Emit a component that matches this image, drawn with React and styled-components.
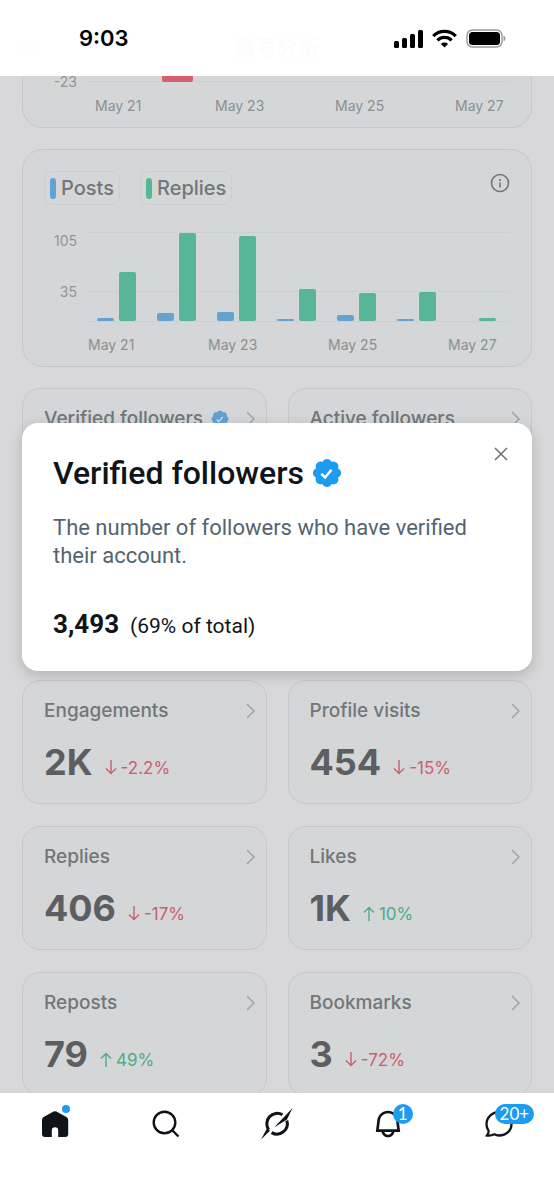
import styled, { createGlobalStyle } from 'styled-components'

const GlobalStyle = createGlobalStyle`
  * {
    box-sizing: border-box;
  }
  body {
    margin: 0;
    background-color: #fff;
    font-family: Inter, "Liberation Sans", sans-serif;
  }
  button {
    font: inherit;
    color: inherit;
    background: none;
    border: none;
    padding: 0;
    text-align: left;
    cursor: pointer;
  }
  h2, h3, p {
    margin: 0;
  }
  svg {
    display: block;
    flex-shrink: 0;
  }
`

const Screen = styled.div`
  display: flex;
  flex-direction: column;
  height: 100vh;
  background-color: #fff;
`

const StatusBar = styled.header`
  position: relative;
  display: flex;
  justify-content: space-between;
  align-items: center;
  height: 76px;
  flex-shrink: 0;
  padding: 0 48px 0 79px;
  color: #000;
`

const Clock = styled.div`
  font-size: 22px;
  font-weight: 600;
`

const StatusIcons = styled.div`
  display: flex;
  align-items: center;
  gap: 9px;
`

const FadedBar = styled.div`
  position: absolute;
  left: 0;
  right: 0;
  top: 34px;
  display: grid;
  grid-template-columns: 1fr auto 1fr;
  align-items: center;
  padding: 0 21px;
  font-family: Inter, "Noto Sans CJK SC", sans-serif;
  font-size: 21px;
  line-height: 28px;
  font-weight: 700;
  color: #fcfcfc;
`

const Content = styled.main`
  flex: 1;
  min-height: 0;
  overflow: hidden;
  padding: 0 22px;
  background-color: #d8d8da;
`

const ChartCard = styled.section`
  border: 1px solid #c5c7c9;
  border-radius: 21px;
  background-color: #d4d6d8;
  padding: ${(props) => (props.$cut ? '0 21px 11px' : '21px 21px 11px')};
  margin-bottom: 21px;
  ${(props) => props.$cut && 'border-top: none; border-top-left-radius: 0; border-top-right-radius: 0;'}
`

const ChartTop = styled.div`
  display: flex;
  align-items: flex-start;
  gap: 20px;
  margin-bottom: 27px;
`

const Legend = styled.div`
  display: flex;
  align-items: center;
  gap: 5px;
  height: 34px;
  padding: 0 5px;
  border: 1px solid #cccfd1;
  border-radius: 8px;
  color: #71767b;
  font-size: 20px;
  font-weight: 500;

  &::before {
    content: '';
    width: 6px;
    height: 21px;
    border-radius: 3px;
    background-color: ${(props) => props.$color};
  }
`

const InfoButton = styled.button`
  margin-left: auto;
  color: #71767b;
`

const ChartBody = styled.div`
  display: grid;
  grid-template-columns: 33px 1fr;
  column-gap: 11px;
`

const YLabels = styled.div`
  display: flex;
  flex-direction: column;
  gap: 35px;
  padding-top: ${(props) => (props.$cut ? '0' : '1px')};
  text-align: right;
  font-size: 14px;
  line-height: ${(props) => (props.$cut ? '12px' : '16px')};
  color: #91969a;
`

const Plot = styled.svg`
  width: 100%;
  height: auto;
`

const XLabels = styled.div`
  grid-column: 2;
  display: grid;
  grid-template-columns: 2fr 2fr 2fr 1fr;
  padding-top: ${(props) => (props.$cut ? '8px' : '13px')};
  margin-left: ${(props) => (props.$cut ? '7px' : '0')};
  margin-right: ${(props) => (props.$cut ? '-5px' : '2px')};
  font-size: 14px;
  line-height: 20px;
  white-space: nowrap;
  color: #8b8f92;
`

const Stats = styled.div`
  position: relative;
`

const StatGrid = styled.div`
  display: grid;
  grid-template-columns: 1fr 1fr;
  grid-auto-rows: 124px;
  gap: 22px 21px;
`

const StatCard = styled.button`
  display: flex;
  flex-direction: column;
  grid-row: ${(props) => props.$row};
  border: 1px solid #c5c7c9;
  border-radius: 18px;
  background-color: #d4d6d8;
  padding: 18px 10px 0 21px;
`

const StatHead = styled.div`
  display: flex;
  align-items: center;
  gap: 8px;
  width: 100%;
  color: #71767b;
  font-size: 19px;
  line-height: 24px;
  font-weight: 500;

  > svg:last-child {
    margin-left: auto;
  }
`

const StatValue = styled.div`
  display: flex;
  align-items: baseline;
  gap: 12px;
  margin-top: 16px;
  color: #5c5e61;
  font-size: 36px;
  line-height: 46px;
  font-weight: 700;
`

const Change = styled.span`
  display: flex;
  align-items: center;
  gap: 4px;
  font-size: 17px;
  line-height: 24px;
  font-weight: 400;
  color: ${(props) => (props.$up ? '#4dab8b' : '#c9606f')};
`

const Popover = styled.section`
  position: absolute;
  top: 35px;
  left: 0;
  right: 0;
  padding: 30px 31px 29px;
  border-radius: 16px;
  background-color: #fff;
  box-shadow: 0 4px 14px rgba(0, 0, 0, 0.18);
  color: #0f1419;
  font-family: Roboto, "Liberation Sans", sans-serif;
`

const CloseButton = styled.button`
  position: absolute;
  top: 24px;
  right: 24px;
  color: #6b7074;
`

const PopoverTitle = styled.h2`
  display: flex;
  align-items: center;
  gap: 8px;
  font-size: 32px;
  line-height: 40px;
  font-weight: 500;
`

const PopoverText = styled.p`
  margin-top: 21px;
  font-size: 22px;
  line-height: 28px;
  color: #536471;
`

const PopoverTotal = styled.p`
  display: flex;
  align-items: baseline;
  gap: 11px;
  margin-top: 38px;
  font-size: 21px;
  line-height: 32px;

  strong {
    font-size: 26px;
    font-weight: 700;
  }
`

const TabBar = styled.nav`
  display: grid;
  grid-template-columns: repeat(5, 1fr);
  justify-items: center;
  align-items: start;
  height: 107px;
  flex-shrink: 0;
  padding-top: 15px;
  background-color: #fff;
  color: #0f1419;
`

const Tab = styled.button`
  position: relative;
`

const Dot = styled.span`
  position: absolute;
  top: -3px;
  right: 1px;
  width: 8px;
  height: 8px;
  border-radius: 50%;
  background-color: #1d9bf0;
`

const Count = styled.span`
  position: absolute;
  top: -4px;
  left: ${(props) => (props.$wide ? '12px' : '21px')};
  min-width: 20px;
  padding: 0 ${(props) => (props.$wide ? '5px' : '0')};
  border-radius: 10px;
  background-color: #1d9bf0;
  color: #fff;
  font-family: Lato, sans-serif;
  font-size: 17px;
  line-height: 20px;
  text-align: center;
`

const days = [
  { posts: 3, replies: 49 },
  { posts: 8, replies: 88 },
  { posts: 9, replies: 85 },
  { posts: 2, replies: 32 },
  { posts: 6, replies: 28 },
  { posts: 2, replies: 29 },
  { posts: 0, replies: 3 },
]

const dates = ['May 21', 'May 23', 'May 25', 'May 27']

const stats = [
  { label: 'Engagements', value: '2K', change: '-2.2%', row: 3 },
  { label: 'Profile visits', value: '454', change: '-15%', row: 3 },
  { label: 'Replies', value: '406', change: '-17%', row: 4 },
  { label: 'Likes', value: '1K', change: '10%', up: true, row: 4 },
  { label: 'Reposts', value: '79', change: '49%', up: true, row: 5 },
  { label: 'Bookmarks', value: '3', change: '-72%', row: 5 },
]

const Verified = ({ size, color }) => (
  <svg width={size} height={size} viewBox="1 1 20 20" fill="none">
    <path
      fill={color}
      d="M20.396 11c-.018-.646-.215-1.275-.57-1.816-.354-.54-.852-.972-1.438-1.246.223-.607.27-1.264.14-1.897-.131-.634-.437-1.218-.882-1.687-.47-.445-1.053-.75-1.687-.882-.633-.13-1.29-.083-1.897.14-.273-.587-.704-1.086-1.245-1.44S11.647 1.62 11 1.604c-.646.017-1.273.213-1.813.568s-.969.854-1.24 1.44c-.608-.223-1.267-.272-1.902-.14-.635.13-1.22.436-1.69.882-.445.47-.749 1.055-.878 1.688-.13.633-.08 1.29.144 1.896-.587.274-1.087.705-1.443 1.245-.356.54-.555 1.17-.574 1.817.02.647.218 1.276.574 1.817.356.54.856.972 1.443 1.245-.224.606-.274 1.263-.144 1.896.13.634.433 1.218.877 1.688.47.443 1.054.747 1.687.878.633.132 1.29.084 1.897-.136.274.586.705 1.084 1.246 1.439.54.354 1.17.551 1.816.569.647-.016 1.276-.213 1.817-.567s.972-.854 1.245-1.44c.604.239 1.266.296 1.903.164.636-.132 1.22-.447 1.68-.907.46-.46.776-1.044.908-1.681s.075-1.299-.165-1.903c.586-.274 1.084-.705 1.439-1.246.354-.54.551-1.17.569-1.816z"
    />
    <path d="M7.2 11.6l2.5 2.4 4.3-5.2" stroke={color === '#1d9bf0' ? '#fff' : '#d4d6d8'} strokeWidth="1.7" />
  </svg>
)

const Chevron = () => (
  <svg width="10" height="16" viewBox="0 0 10 16" fill="none" stroke="#9ba6ae" strokeWidth="1.5">
    <path d="M1 1l7 7-7 7" />
  </svg>
)

const Arrow = ({ up }) => (
  <svg width="12" height="15" viewBox="0 0 12 15" fill="none" stroke="currentColor" strokeWidth="1.4">
    <path d={up ? 'M6 15V1M1 6.5L6 1.5l5 5' : 'M6 0v14M1 8.5l5 5 5-5'} />
  </svg>
)

function ChartDates({ cut }) {
  return (
    <XLabels $cut={cut}>
      {dates.map((date) => (
        <span key={date}>{date}</span>
      ))}
    </XLabels>
  )
}

function Stat({ stat }) {
  return (
    <StatCard $row={stat.row}>
      <StatHead>
        {stat.label}
        <Chevron />
      </StatHead>
      <StatValue>
        {stat.value}
        <Change $up={stat.up}>
          <Arrow up={stat.up} />
          {stat.change}
        </Change>
      </StatValue>
    </StatCard>
  )
}

function App() {
  return (
    <>
      <GlobalStyle />
      <Screen>
        <StatusBar>
          <FadedBar>
            <svg width="20" height="18" viewBox="0 0 20 18" fill="none" stroke="currentColor" strokeWidth="2">
              <path d="M20 9H2M9 1L1.5 9 9 17" />
            </svg>
            账号分析
          </FadedBar>
          <Clock>9:03</Clock>
          <StatusIcons>
            <svg width="29" height="19" viewBox="0 0 29 19">
              <rect x="0" y="12" width="5" height="7" rx="1.5" />
              <rect x="8" y="9" width="5" height="10" rx="1.5" />
              <rect x="16" y="5" width="5" height="14" rx="1.5" />
              <rect x="24" y="1" width="5" height="18" rx="1.5" />
            </svg>
            <svg width="25" height="19" viewBox="0 0 25 19" fill="none" stroke="#000" strokeWidth="3.3">
              <path d="M1.2 7.1a16 16 0 0 1 22.6 0" />
              <path d="M5.4 11.4a10 10 0 0 1 14.2 0" />
              <path d="M12.5 18.6l-3.6-3.7a5.2 5.2 0 0 1 7.2 0z" fill="#000" stroke="none" />
            </svg>
            <svg width="40" height="19" viewBox="0 0 40 19">
              <rect x="1" y="1" width="35" height="17" rx="5.5" fill="none" stroke="#999" strokeWidth="1.4" />
              <rect x="3" y="3" width="31" height="13" rx="3.5" />
              <path d="M37.5 6.5v6q2-1 2-3t-2-3z" fill="#999" />
            </svg>
          </StatusIcons>
        </StatusBar>

        <Content>
          <ChartCard $cut>
            <ChartBody>
              <YLabels $cut>-23</YLabels>
              <div>
                <Plot viewBox="0 0 422 12">
                  <path d="M0 5.5h422" stroke="#cdcfd2" />
                  <path d="M74 0h31v4q0 2-2 2H76q-2 0-2-2z" fill="#d2616c" />
                </Plot>
                <ChartDates cut />
              </div>
            </ChartBody>
          </ChartCard>

          <ChartCard>
            <ChartTop>
              <Legend $color="#62a3d4">Posts</Legend>
              <Legend $color="#58b698">Replies</Legend>
              <InfoButton aria-label="About this chart">
                <svg width="20" height="24" viewBox="0 0 20 24" fill="none" stroke="currentColor" strokeWidth="1.6">
                  <circle cx="10" cy="12" r="8.5" />
                  <path d="M10 11.5v5M10 8v2" />
                </svg>
              </InfoButton>
            </ChartTop>
            <ChartBody>
              <YLabels>
                <span>105</span>
                <span>35</span>
              </YLabels>
              <Plot viewBox="0 0 422 90">
                <path d="M0 .5h422M0 59.5h422M0 89.5h422" stroke="#cdcfd2" />
                {days.map((day, i) => (
                  <g key={i}>
                    <rect x={9 + i * 60} y={89 - day.posts} width="17" height={day.posts} rx={Math.min(2, day.posts / 2)} fill="#62a3d4" />
                    <rect x={31 + i * 60} y={89 - day.replies} width="17" height={day.replies} rx={Math.min(2, day.replies / 2)} fill="#58b698" />
                  </g>
                ))}
              </Plot>
              <ChartDates />
            </ChartBody>
          </ChartCard>

          <Stats>
            <StatGrid>
              <StatCard $row={1}>
                <StatHead>
                  Verified followers
                  <Verified size={18} color="#62a3d4" />
                  <Chevron />
                </StatHead>
              </StatCard>
              <StatCard $row={1}>
                <StatHead>
                  Active followers
                  <Chevron />
                </StatHead>
              </StatCard>
              {stats.map((stat) => (
                <Stat key={stat.label} stat={stat} />
              ))}
            </StatGrid>

            <Popover role="dialog" aria-label="Verified followers">
              <CloseButton aria-label="Close">
                <svg width="14" height="14" viewBox="0 0 14 14" stroke="currentColor" strokeWidth="1.5">
                  <path d="M1 1l12 12M13 1L1 13" />
                </svg>
              </CloseButton>
              <PopoverTitle>
                Verified followers
                <Verified size={30} color="#1d9bf0" />
              </PopoverTitle>
              <PopoverText>The number of followers who have verified their account.</PopoverText>
              <PopoverTotal>
                <strong>3,493</strong> (69% of total)
              </PopoverTotal>
            </Popover>
          </Stats>
        </Content>

        <TabBar>
          <Tab aria-label="Home">
            <svg width="32" height="32" viewBox="0 0 32 32" fill="currentColor">
              <path d="M14.6 3.6q1.4-.8 2.8 0l10 5.4q1.8 1 1.8 3V26q0 3-3 3h-7v-6.500q0-3.200-3.200-3.200t-3.200 3.200V29H6q-3 0-3-3V12q0-2 1.600-3z" />
            </svg>
            <Dot />
          </Tab>
          <Tab aria-label="Search">
            <svg width="32" height="32" viewBox="0 0 32 32" fill="none" stroke="currentColor" strokeWidth="2.4">
              <circle cx="14.5" cy="14.5" r="10.8" />
              <path d="M22 22l6.5 6.5" />
            </svg>
          </Tab>
          <Tab aria-label="Grok">
            <svg width="32" height="32" viewBox="0 0 32 32" fill="none" stroke="currentColor" strokeWidth="3">
              <path d="M21.5 6.800A10.400 10.400 0 0 0 7.600 21.600" />
              <path d="M25.800 12.500A10.400 10.400 0 0 1 10.600 24.600" />
              <path d="M31.500 0L23.500 8.500 13 19.500 26 11.500z" fill="currentColor" stroke="none" />
              <path d="M6.200 20l2.800 2.800-9 8.700z" fill="currentColor" stroke="none" />
            </svg>
          </Tab>
          <Tab aria-label="Notifications">
            <svg width="32" height="32" viewBox="0 0 24 24" fill="currentColor">
              <path d="M19.993 9.042C19.48 5.017 16.054 2 11.996 2s-7.49 3.021-7.999 7.051L2.866 18H7.1c.463 2.282 2.481 4 4.9 4s4.437-1.718 4.9-4h4.236l-1.143-8.958zM12 20c-1.306 0-2.417-.835-2.829-2h5.658c-.412 1.165-1.523 2-2.829 2zm-6.866-4l.847-6.698C6.364 6.272 8.941 4 11.996 4s5.627 2.268 6.013 5.295L18.864 16H5.134z" />
            </svg>
            <Count>1</Count>
          </Tab>
          <Tab aria-label="Messages">
            <svg width="32" height="32" viewBox="0 0 32 32" fill="none" stroke="currentColor" strokeWidth="2.3">
              <path d="M16.5 4C9 4 3.5 9.5 3.5 16c0 2.8.9 4.8 1.8 6.2.5 1-.3 3.8-1.300 5.300 3 .5 5.500-.3 7.300-1.200 1.300.7 3 1.200 4.700 1.200C23.500 27.500 28.500 22.500 28.500 16S23.500 4 16.500 4z" />
            </svg>
            <Count $wide>20+</Count>
          </Tab>
        </TabBar>
      </Screen>
    </>
  )
}

export default App
